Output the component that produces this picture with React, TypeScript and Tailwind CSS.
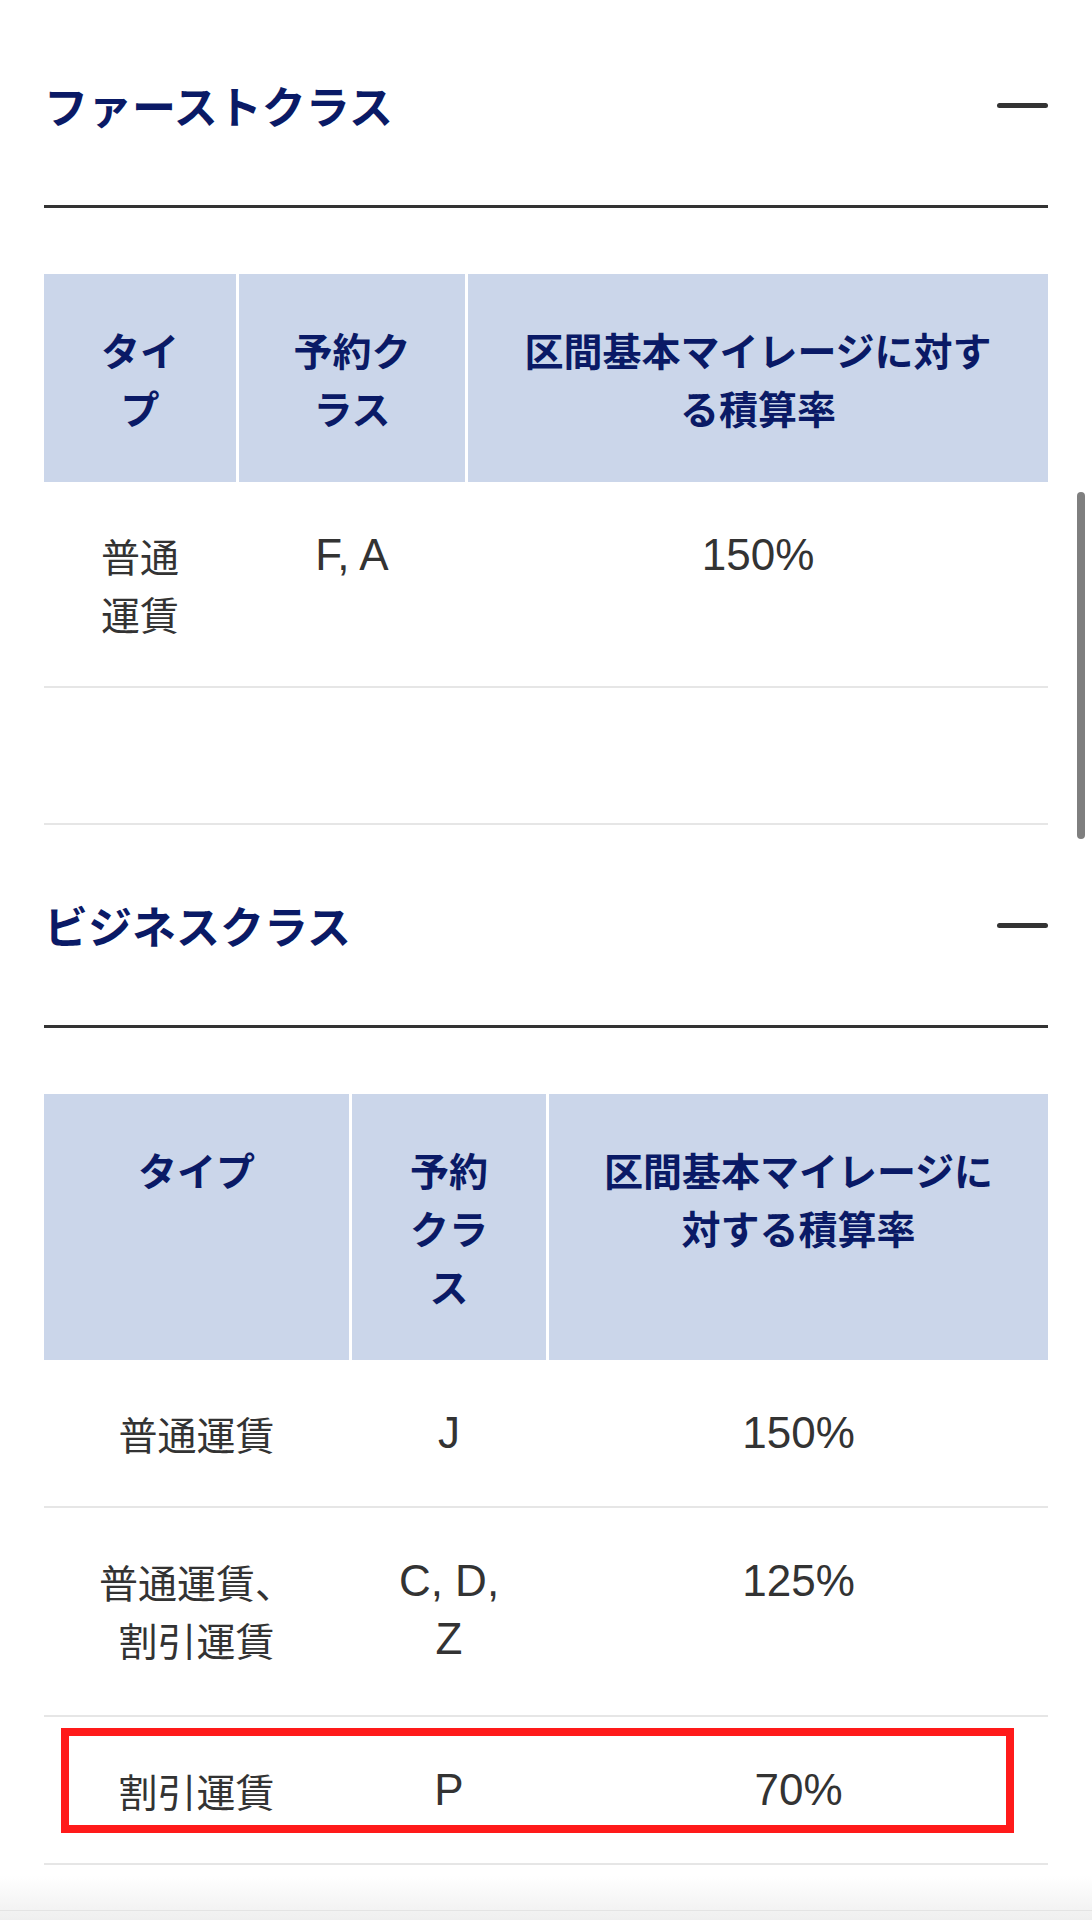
type Row = {
  cells: string[][];
  highlight?: boolean;
  tall?: boolean;
};

type TableSpec = {
  title: string;
  cols: string;
  head: string[][];
  rows: Row[];
  trailingEmpty?: boolean;
};

const JP = "font-['Noto_Sans_CJK_JP',sans-serif]";
const LATIN = "font-['Liberation_Sans',sans-serif]";

const first: TableSpec = {
  title: "ファーストクラス",
  cols: "grid-cols-[192px_226px_1fr]",
  head: [["タイ", "プ"], ["予約ク", "ラス"], ["区間基本マイレージに対す", "る積算率"]],
  rows: [{ cells: [["普通", "運賃"], ["F, A"], ["150%"]] }],
  trailingEmpty: true,
};

const business: TableSpec = {
  title: "ビジネスクラス",
  cols: "grid-cols-[305px_194px_1fr]",
  head: [["タイプ"], ["予約", "クラ", "ス"], ["区間基本マイレージに", "対する積算率"]],
  rows: [
    { cells: [["普通運賃"], ["J"], ["150%"]] },
    { cells: [["普通運賃、", "割引運賃"], ["C, D,", "Z"], ["125%"]], tall: true },
    { cells: [["割引運賃"], ["P"], ["70%"]], highlight: true },
  ],
};

// 英数字だけのセルかどうか
const isLatin = (lines: string[]) => lines.every((l) => /^[\x20-\x7e]+$/.test(l));

export default function App() {
  return (
    <div className={`relative h-[1920px] overflow-hidden bg-white pt-[5px] ${JP}`}>
      <div className="px-[44px]">
        <ClassSection spec={first} />
        <ClassSection spec={business} />
      </div>

      {/* スクロールバー */}
      <div className="absolute right-[7px] top-[492px] h-[347px] w-[8px] rounded-full bg-[#7f7f7f]" />

      {/* 下端の影 */}
      <div className="absolute inset-x-0 bottom-0 h-[44px] bg-linear-to-b from-white to-[#efefef]" />
      <div className="absolute inset-x-0 bottom-[9px] h-px bg-[#e4e4e4]" />
    </div>
  );
}

function ClassSection({ spec }: { spec: TableSpec }) {
  return (
    <section>
      <div className="flex h-[203px] items-center justify-between border-b-[3px] border-[#333333]">
        <h2 className="text-[44px] font-bold leading-none text-[#0a1a66]">{spec.title}</h2>
        <span className="h-[5px] w-[51px] rounded-full bg-[#333333]" />
      </div>

      <div className="mt-[66px]">
        {/* ヘッダ */}
        <div className={`grid ${spec.cols} gap-x-[3px]`}>
          {spec.head.map((lines, i) => (
            <div
              key={i}
              className="bg-[#cbd6ea] px-[20px] py-[46px] text-center text-[39px] font-bold leading-[58px] text-[#0a1a66]"
            >
              <Lines lines={lines} />
            </div>
          ))}
        </div>

        {/* 本体 */}
        {spec.rows.map((row, r) => (
          <div
            key={r}
            className={`relative grid ${spec.cols} gap-x-[3px] border-b-2 border-[#e6e6e6]`}
          >
            {row.cells.map((lines, i) => (
              <div
                key={i}
                className={`px-[20px] pt-[44px] text-center leading-[58px] text-[#333333] ${
                  row.tall ? "pb-[47px]" : "pb-[44px]"
                } ${isLatin(lines) ? `${LATIN} text-[44px]` : "text-[39px]"}`}
              >
                <Lines lines={lines} />
              </div>
            ))}
            {row.highlight && (
              <div className="pointer-events-none absolute bottom-[30px] left-[17px] right-[34px] top-[11px] border-[8px] border-[#ff1a1a]" />
            )}
          </div>
        ))}

        {spec.trailingEmpty && <div className="h-[137px] border-b-2 border-[#e6e6e6]" />}
      </div>
    </section>
  );
}

function Lines({ lines }: { lines: string[] }) {
  return (
    <>
      {lines.map((l, i) => (
        <span key={i} className="block whitespace-nowrap">
          {l}
        </span>
      ))}
    </>
  );
}
